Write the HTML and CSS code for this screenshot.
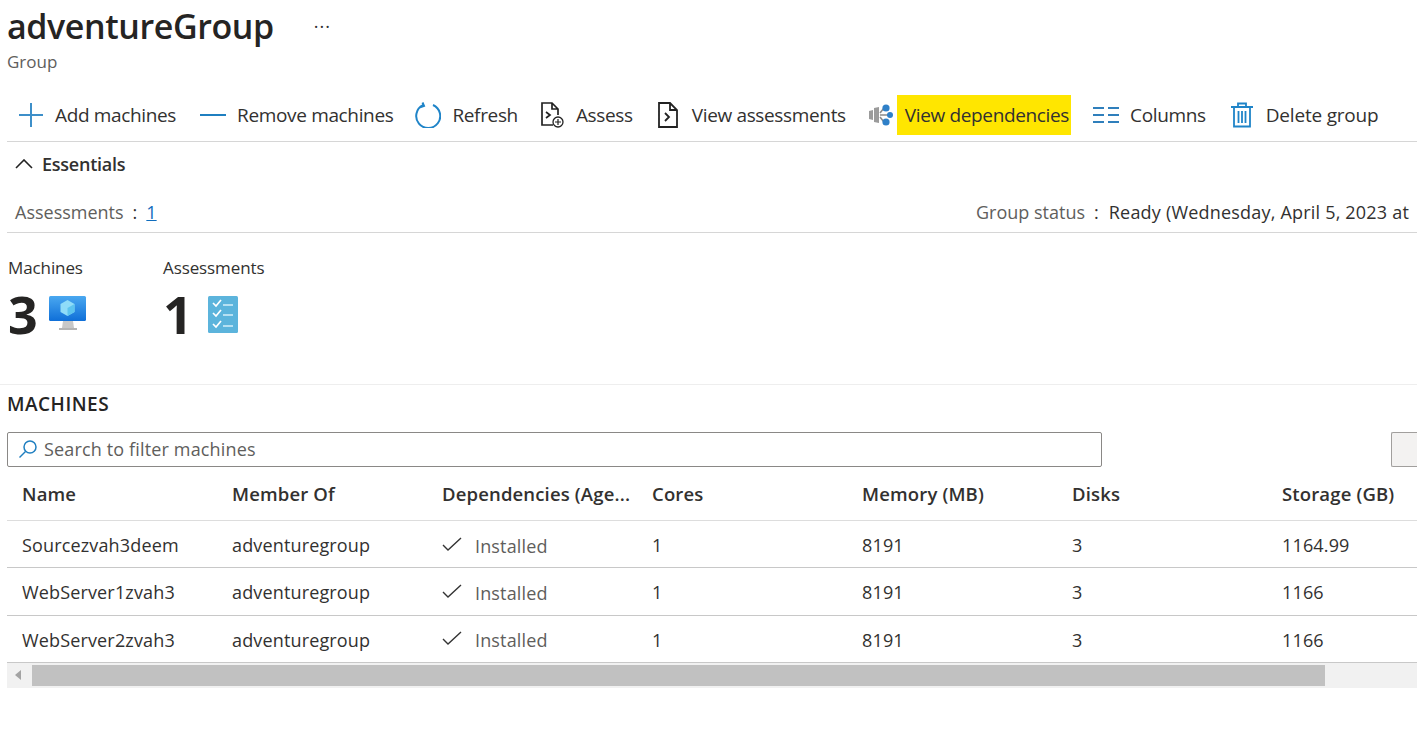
FILE: index.html
```html
<!DOCTYPE html>
<html lang="en">
<head>
    <meta charset="UTF-8">
    <meta name="viewport" content="width=device-width, initial-scale=1.0">
    <title>adventureGroup</title>
    <link rel="stylesheet" href="styles.css">
</head>

<body>
    <header class="title-block">
        <div class="title-row">
            <h1>adventureGroup</h1>
            <span class="more">&middot;&middot;&middot;</span>
        </div>
        <div class="subtitle">Group</div>
    </header>

    <div class="toolbar">
        <button class="tool tool-add">
            <svg width="24" height="24" viewBox="0 0 24 24"><path d="M12 0v24M0 12h24" stroke="#3d8fc9" stroke-width="2" fill="none"/></svg>
            <span>Add machines</span>
        </button>
        <button class="tool tool-remove">
            <svg width="26" height="24" viewBox="0 0 26 24"><path d="M0 12h26" stroke="#1f7fc0" stroke-width="2" fill="none"/></svg>
            <span>Remove machines</span>
        </button>
        <button class="tool tool-refresh">
            <svg width="26" height="26" viewBox="0 0 26 26"><path d="M8 3.2A12 12 0 1 0 18 3M7.5 0.5 9 4l-3.8 1.2" stroke="#1f84c8" stroke-width="2" fill="none"/></svg>
            <span>Refresh</span>
        </button>
        <button class="tool tool-assess">
            <svg width="25" height="26" viewBox="0 0 25 26"><path d="M13 23H2V1h10l6 6v6M12 1v6h6M6 10l4 3-4 3" stroke="#222" stroke-width="1.7" fill="none"/><circle cx="18" cy="20" r="5" stroke="#222" stroke-width="1.3" fill="#fff"/><path d="M18 17v6M15 20h6" stroke="#222" stroke-width="1.2"/></svg>
            <span>Assess</span>
        </button>
        <button class="tool tool-view">
            <svg width="23" height="26" viewBox="0 0 23 26"><path d="M2 1h11l7 7v17H2zM13 1v7h7M8 11l4 4-4 4" stroke="#222" stroke-width="1.8" fill="none"/></svg>
            <span>View assessments</span>
        </button>
        <div class="tool tool-deps">
            <svg width="24" height="24" viewBox="0 0 24 24">
                <path d="M0 8l4-1v10l-4-1zM5 5l5-1v16l-5-1z" fill="#9b9b9b"/>
                <path d="M11 10l4-5M11 12h8M11 14l4 5" stroke="#8a8a8a" stroke-width="1.6"/>
                <circle cx="17" cy="5" r="3.6" fill="#2f80c8"/><circle cx="21" cy="12" r="3" fill="#2f80c8"/><circle cx="17" cy="19" r="3.6" fill="#2f80c8"/>
            </svg>
            <span class="highlight">View dependencies</span>
        </div>
        <button class="tool tool-columns">
            <svg width="26" height="18" viewBox="0 0 26 18"><path d="M0 2h11M15 2h11M0 9h11M15 9h11M0 16h11M15 16h11" stroke="#2f7fbc" stroke-width="2" fill="none"/></svg>
            <span>Columns</span>
        </button>
        <button class="tool tool-delete">
            <svg width="22" height="26" viewBox="0 0 22 26"><path d="M0 5h22M7 5V1.500h8V5M3 5v19.500h16V5M7.500 9v12M11 9v12M14.500 9v12" stroke="#1f84c8" stroke-width="1.800" fill="none"/></svg>
            <span>Delete group</span>
        </button>
    </div>

    <div class="essentials-head">
        <svg width="18" height="10" viewBox="0 0 18 10"><path d="M1 9l8-8 8 8" stroke="#222" stroke-width="1.600" fill="none"/></svg>
        <span>Essentials</span>
    </div>

    <div class="essentials-row">
        <div><span class="key">Assessments</span><span class="sep">:</span><a href="#">1</a></div>
        <div class="status"><span class="key">Group status</span><span class="sep">:</span><span class="status-value">Ready (Wednesday, April 5, 2023 at</span></div>
    </div>

    <div class="stats">
        <div class="stat stat-machines">
            <div class="stat-label">Machines</div>
            <div class="stat-value">
                <span>3</span>
                <svg width="38" height="36" viewBox="0 0 38 36">
                    <defs>
                        <linearGradient id="screen" x1="0" y1="0" x2="0" y2="1"><stop offset="0" stop-color="#4aa8f0"/><stop offset="1" stop-color="#0f6fd8"/></linearGradient>
                    </defs>
                    <path d="M14 26h10l1 7H13z" fill="#c8c8c8"/>
                    <path d="M10 33h18v2H10z" fill="#b4b4b4"/>
                    <rect x="0" y="1" width="37" height="25" rx="1.500" fill="url(#screen)"/>
                    <path d="M18.500 5l7 4v8l-7 4-7-4V9z" fill="#8fdcf8"/>
                    <path d="M18.500 13l7-4v8l-7 4z" fill="#5cc4ef"/>
                </svg>
            </div>
        </div>
        <div class="stat stat-assess">
            <div class="stat-label">Assessments</div>
            <div class="stat-value">
                <span>1</span>
                <svg width="30" height="37" viewBox="0 0 30 37">
                    <rect width="30" height="37" rx="1.500" fill="#5cb4dc"/>
                    <path d="M5 7l3 3 5-6M5 17l3 3 5-6M5 28l3 3 5-6" stroke="#fff" stroke-width="1.700" fill="none"/>
                    <path d="M15 9h10M15 19h10M15 30h10" stroke="#b6e0f2" stroke-width="2"/>
                </svg>
            </div>
        </div>
    </div>

    <section class="machines">
        <h2>MACHINES</h2>
        <div class="filter-row">
            <div class="search">
                <svg width="20" height="20" viewBox="0 0 20 20"><circle cx="12" cy="8" r="6" stroke="#1f7fc0" stroke-width="1.500" fill="none"/><path d="M7.500 12.500 1.500 18.500" stroke="#1f7fc0" stroke-width="1.500"/></svg>
                <span>Search to filter machines</span>
            </div>
            <div class="filter-btn"></div>
        </div>

        <div class="grid grid-head">
            <div>Name</div><div>Member Of</div><div>Dependencies (Age...</div><div>Cores</div><div>Memory (MB)</div><div>Disks</div><div>Storage (GB)</div>
        </div>
        <div class="grid grid-row">
            <div>Sourcezvah3deem</div><div>adventuregroup</div>
            <div class="dep"><svg width="20" height="14" viewBox="0 0 20 14"><path d="M1 8l5 5L19 1" stroke="#333" stroke-width="1.400" fill="none"/></svg><span>Installed</span></div>
            <div>1</div><div>8191</div><div>3</div><div>1164.99</div>
        </div>
        <div class="grid grid-row">
            <div>WebServer1zvah3</div><div>adventuregroup</div>
            <div class="dep"><svg width="20" height="14" viewBox="0 0 20 14"><path d="M1 8l5 5L19 1" stroke="#333" stroke-width="1.400" fill="none"/></svg><span>Installed</span></div>
            <div>1</div><div>8191</div><div>3</div><div>1166</div>
        </div>
        <div class="grid grid-row">
            <div>WebServer2zvah3</div><div>adventuregroup</div>
            <div class="dep"><svg width="20" height="14" viewBox="0 0 20 14"><path d="M1 8l5 5L19 1" stroke="#333" stroke-width="1.400" fill="none"/></svg><span>Installed</span></div>
            <div>1</div><div>8191</div><div>3</div><div>1166</div>
        </div>

        <div class="hscroll">
            <div class="arrow"></div>
            <div class="thumb"></div>
        </div>
    </section>
</body>
</html>
```

FILE: styles.css
```css
body {
    font-family: "Open Sans", "Noto Sans", sans-serif;
    color: #323130;
    background-color: #fff;
    margin: 0;
    height: 730px;
    overflow: hidden;
    font-size: 18px;
}

.title-block {
    padding-left: 7px;
    height: 91px;
}

.title-row {
    display: flex;
    align-items: center;
    height: 52px;
}

h1 {
    font-size: 34px;
    font-weight: 600;
    color: #252423;
    margin: 0;
    letter-spacing: -0.4px;
}

.more {
    margin-left: 40px;
    font-size: 18px;
    color: #323130;
    letter-spacing: 1px;
}

.subtitle {
    font-size: 17px;
    color: #605e5c;
    line-height: 20px;
}

.toolbar {
    display: flex;
    align-items: center;
    height: 51px;
    box-sizing: border-box;
    padding-bottom: 2px;
    border-bottom: 1px solid #d6d6d6;
    margin-left: 7px;
}

.tool {
    display: flex;
    align-items: center;
    gap: 12px;
    padding: 0;
    border: 0;
    background: none;
    font: inherit;
    font-size: 19px;
    color: #323130;
    letter-spacing: -0.35px;
    white-space: nowrap;
}

.tool-add { margin-left: 12px; }
.tool-remove { margin-left: 24px; gap: 11px; }
.tool-refresh { margin-left: 22px; gap: 11px; }
.tool-assess { margin-left: 22px; gap: 11px; }
.tool-view { margin-left: 24px; }
.tool-deps { margin-left: 23px; gap: 4px; }
.tool-columns { margin-left: 22px; gap: 11px; }
.tool-delete { margin-left: 25px; gap: 13px; letter-spacing: -0.2px; }

.highlight {
    background-color: #ffe600;
    padding: 0 2px 0 8px;
    height: 40px;
    line-height: 40px;
}

.essentials-head {
    display: flex;
    align-items: center;
    gap: 9px;
    height: 45px;
    box-sizing: border-box;
    padding: 0 0 2px 15px;
    font-size: 18px;
    font-weight: 600;
    letter-spacing: -0.25px;
}

.essentials-row {
    display: flex;
    justify-content: space-between;
    height: 45px;
    line-height: 50px;
    margin-left: 7px;
    padding-left: 8px;
    border-bottom: 1px solid #d6d6d6;
    font-size: 18px;
    white-space: nowrap;
}

.key { color: #605e5c; }
.sep { margin: 0 9px; }
.essentials-row a { color: #0f6cbd; }

.status {
    width: 441px;
}

.status-value { margin-left: 1px; letter-spacing: 0.2px; }

.stats {
    display: flex;
    height: 152px;
    border-bottom: 1px solid #eeeeee;
    padding-left: 8px;
    box-sizing: border-box;
}

.stat { padding-top: 24px; }
.stat-machines { width: 155px; }

.stat-label {
    font-size: 17px;
    line-height: 22px;
    letter-spacing: -0.1px;
}

.stat-value {
    display: flex;
    align-items: center;
    margin-top: 6px;
    font-size: 52px;
    font-weight: 700;
    line-height: 58px;
    color: #252423;
}

.stat-machines svg { margin-left: 11px; margin-top: -2px; }
.stat-assess svg { margin-left: 15px; }

.machines { padding-left: 7px; }

h2 {
    font-size: 19px;
    font-weight: 600;
    line-height: 24px;
    margin: 0;
    padding-top: 7px;
    color: #252423;
    letter-spacing: 0.5px;
}

.filter-row {
    display: flex;
    margin-top: 16px;
    height: 35px;
}

.search {
    display: flex;
    align-items: center;
    gap: 6px;
    flex: none;
    width: 1095px;
    padding: 0 0 2px 10px;
    border: 1px solid #8a8886;
    border-radius: 2px;
    box-sizing: border-box;
    color: #605e5c;
    letter-spacing: 0.15px;
}

.filter-btn {
    margin-left: 289px;
    width: 26px;
    flex: none;
    background-color: #f3f2f1;
    border: 1px solid #a19f9d;
    border-right: 0;
    border-radius: 2px 0 0 2px;
    box-sizing: border-box;
}

.grid {
    display: grid;
    grid-template-columns: repeat(6, 210px) 135px;
    padding-left: 15px;
    align-items: center;
    white-space: nowrap;
    letter-spacing: 0.15px;
}

.grid-head {
    height: 54px;
    box-sizing: border-box;
    font-weight: 600;
    font-size: 18.500px;
    border-bottom: 1px solid #dddddd;
}

.grid-row {
    height: 47.330px;
    box-sizing: border-box;
    padding-top: 2px;
    border-bottom: 1px solid #c8c8c8;
}

.dep {
    display: flex;
    align-items: center;
    gap: 13px;
    color: #605e5c;
}

.dep svg { margin-top: -3px; }
.dep span { padding-top: 1px; }

.hscroll {
    display: flex;
    align-items: center;
    height: 25px;
    background-color: #f1f1f1;
}

.arrow {
    margin-left: 8px;
    width: 0;
    height: 0;
    border-top: 5px solid transparent;
    border-bottom: 5px solid transparent;
    border-right: 6px solid #a3a3a3;
}

.thumb {
    margin-left: 11px;
    width: 1293px;
    height: 21px;
    background-color: #c1c1c1;
}
```
